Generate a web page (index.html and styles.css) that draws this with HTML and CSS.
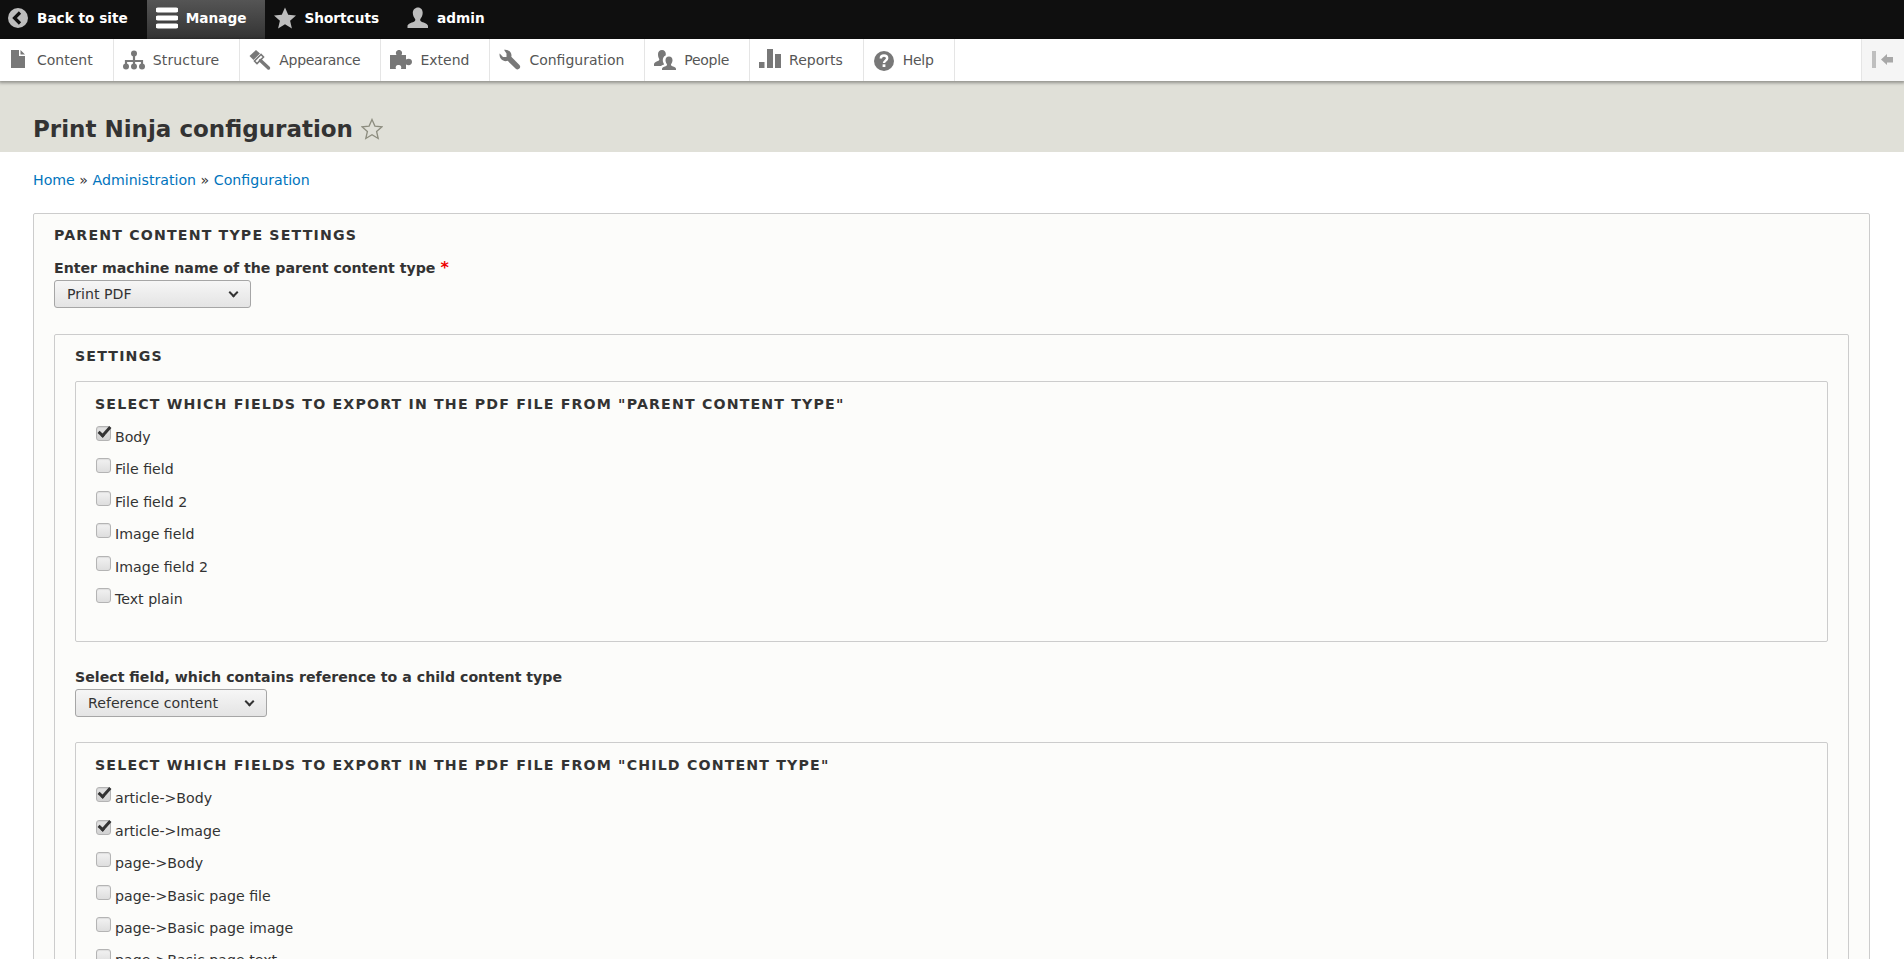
FILE: index.html
```html
<!DOCTYPE html>
<html lang="en">
<head>
    <meta charset="UTF-8">
    <meta name="viewport" content="width=device-width, initial-scale=1.0">
    <title>Print Ninja configuration</title>
    <link rel="stylesheet" href="styles.css">
</head>
<body>
    <div class="toolbar-bar">
        <a class="bar-tab first" href="#">
            <svg class="icon" viewBox="0 0 22 22"><circle cx="11" cy="11" r="10" fill="#bdbdbd"/><path d="M13 5.500L7.500 11l5.500 5.500" fill="none" stroke="#0f0f0f" stroke-width="3.200"/></svg>
            Back to site
        </a>
        <a class="bar-tab active" href="#">
            <svg class="icon" viewBox="0 0 22 22"><path d="M2 1h18a2 2 0 0 1 0 5H2a2 2 0 0 1 0-5zM2 9h18a2 2 0 0 1 0 5H2a2 2 0 0 1 0-5zM2 17h18a2 2 0 0 1 0 5H2a2 2 0 0 1 0-5z" fill="#fff" transform="translate(0 -.5)"/></svg>
            Manage
        </a>
        <a class="bar-tab" href="#">
            <svg class="icon" viewBox="0 0 22 22"><path d="M11 .5l3.200 7.300 7.800.7-5.900 5.200 1.800 7.700L11 17.300l-6.900 4.100 1.800-7.700L0 8.500l7.800-.7z" fill="#bdbdbd"/></svg>
            Shortcuts
        </a>
        <a class="bar-tab" href="#">
            <svg class="icon" viewBox="0 0 22 22"><path d="M11 .5c3 0 4.700 2.300 4.700 5.300 0 2.700-1.300 5-2.300 6.200-.6 1 0 2.300 1.200 2.800 2.700 1 6.400 2.200 6.400 4.400V21H.5v-1.800c0-2.200 3.700-3.400 6.400-4.400 1.200-.5 1.800-1.800 1.200-2.800-1-1.200-2.300-3.500-2.300-6.200C5.800 2.800 8 .5 11 .5z" fill="#bdbdbd"/></svg>
            admin
        </a>
    </div>

    <div class="toolbar-tray">
        <a class="tray-link first" href="#">
            <svg class="icon" viewBox="0 0 22 22"><path d="M4 1h8v6h6v12H4zM13.500 1L18 5.500h-4.500z" fill="#787878"/></svg>
            Content
        </a>
        <a class="tray-link loose" href="#">
            <svg class="icon" viewBox="0 0 22 22"><circle cx="11" cy="4.500" r="3" fill="#787878"/><circle cx="3" cy="17.500" r="3" fill="#787878"/><circle cx="11" cy="17.500" r="3" fill="#787878"/><circle cx="19" cy="17.500" r="3" fill="#787878"/><path d="M11 4v13M3 17v-5h16v5" fill="none" stroke="#787878" stroke-width="2.200"/></svg>
            Structure
        </a>
        <a class="tray-link tight" href="#">
            <svg class="icon" viewBox="0 0 22 22"><path d="M7 1L.5 7l4 4L11 4.500z" fill="#787878"/><path d="M12 5.500L5.500 12l2.500 2.500L14.500 8z" fill="none" stroke="#787878" stroke-width="1.600"/><path d="M11.500 11.500l8 7.500" stroke="#787878" stroke-width="3.400" stroke-linecap="round"/></svg>
            Appearance
        </a>
        <a class="tray-link" href="#">
            <svg class="icon" viewBox="0 0 22 22"><path d="M0 6h6.500C5 3.500 6.500 1 9 1s4 2.500 2.500 5H16v4.500c3-1.500 6-.5 6 2.500s-3 4-6 2.500V20h-5c1-2.500-.5-4-2.500-4S5 17.500 6 20H0z" fill="#787878"/></svg>
            Extend
        </a>
        <a class="tray-link" href="#">
            <svg class="icon" viewBox="0 0 22 22"><path d="M5 .8C8.500 0 12.500 2.500 12.500 6.500c0 .5-.1.9-.2 1.300l7.900 7.900c1.300 1.300 1.300 2.800.2 3.900s-2.600 1.100-3.900-.2L8.600 11.800C4.500 13.200.5 10 .5 5.500c0-.3.1-.5.2-.9L4 8h3.500V4.500z" fill="#787878"/></svg>
            Configuration
        </a>
        <a class="tray-link tight" href="#">
            <svg class="icon" viewBox="0 0 22 22"><path d="M8 1c2.500 0 3.800 1.700 3.800 4 0 .6 0 1-.2 1.500-2 .8-2.800 2.700-2.800 4.700 0 1.700.7 3 1.400 4-.8.700-2.400 1-3.200 1.800H0v-2c0-1.500 3-2.500 4.500-3.200.8-.4 1-1.300.6-2C4.400 8.700 4 7 4 5c0-2.300 1.500-4 4-4z" fill="#787878"/><path d="M15 7.500c2.300 0 3.500 1.600 3.500 3.800 0 1.500-.6 2.800-1.300 3.800-.4.800-.2 1.500.6 1.900 1.500.7 4.200 1.300 4.200 2.700V21H8v-1.300c0-1.400 2.700-2 4.200-2.700.8-.4 1-1.100.6-1.900-.7-1-1.300-2.300-1.300-3.800 0-2.200 1.200-3.800 3.500-3.800z" fill="#787878"/></svg>
            People
        </a>
        <a class="tray-link" href="#">
            <svg class="icon" viewBox="0 0 22 22"><path d="M0 13h5.500v6H0zM8 0h6v19H8zM16 5h6v14h-6z" fill="#787878"/></svg>
            Reports
        </a>
        <a class="tray-link tight" href="#">
            <svg class="icon" viewBox="0 0 22 22"><circle cx="11" cy="12" r="10" fill="#787878"/><path d="M7.800 9.500c0-2 1.500-3 3.200-3s3.200 1 3.200 2.800c0 2.200-3.200 2.400-3.200 4.700" fill="none" stroke="#fff" stroke-width="2.400"/><path d="M9.600 15.300h2.800V18H9.600z" fill="#fff"/></svg>
            Help
        </a>
        <button class="tray-toggle" type="button" aria-label="Collapse">
            <svg viewBox="0 0 22 18" width="22" height="18"><path d="M0 0h4v17H0z" fill="#bfbfbf"/><path d="M9 8.500L15 3v3h6v5.500h-6V14z" fill="#a8a8a8"/></svg>
        </button>
    </div>

    <header class="page-header">
        <h1 class="page-title">Print Ninja configuration</h1>
        <svg class="title-star" viewBox="0 0 22 22"><path d="M11 1.500l2.900 6.600 7.100.7-5.400 4.700 1.600 7-6.200-3.700-6.200 3.700 1.600-7L1 8.800l7.100-.7z" fill="none" stroke="#8d8d7f" stroke-width="1.300"/></svg>
    </header>

    <main class="content">
        <nav class="breadcrumb">
            <a href="#">Home</a> » <a href="#">Administration</a> » <a href="#">Configuration</a>
        </nav>

        <div class="fieldset">
            <div class="legend">Parent content type settings</div>
            <label class="field-label" for="parent">Enter machine name of the parent content type <span class="required">*</span></label>
            <div class="select-wrap select-parent">
                <select id="parent"><option>Print PDF</option></select>
            </div>

            <div class="fieldset nested">
                <div class="legend settings-legend">Settings</div>

                <div class="fieldset checks">
                    <div class="legend">Select which fields to export in the PDF file from "Parent content type"</div>
                    <label class="check"><input type="checkbox" checked> Body</label>
                    <label class="check"><input type="checkbox"> File field</label>
                    <label class="check"><input type="checkbox"> File field 2</label>
                    <label class="check"><input type="checkbox"> Image field</label>
                    <label class="check"><input type="checkbox"> Image field 2</label>
                    <label class="check"><input type="checkbox"> Text plain</label>
                </div>

                <label class="field-label" for="reference">Select field, which contains reference to a child content type</label>
                <div class="select-wrap select-reference">
                    <select id="reference"><option>Reference content</option></select>
                </div>

                <div class="fieldset checks nested">
                    <div class="legend">Select which fields to export in the PDF file from "Child content type"</div>
                    <label class="check"><input type="checkbox" checked> article-&gt;Body</label>
                    <label class="check"><input type="checkbox" checked> article-&gt;Image</label>
                    <label class="check"><input type="checkbox"> page-&gt;Body</label>
                    <label class="check"><input type="checkbox"> page-&gt;Basic page file</label>
                    <label class="check"><input type="checkbox"> page-&gt;Basic page image</label>
                    <label class="check"><input type="checkbox"> page-&gt;Basic page text</label>
                </div>
            </div>
        </div>
    </main>
</body>
</html>
```

FILE: styles.css
```css
html {
    height: 959px;
    overflow: hidden;
}

body {
    margin: 0;
    font-family: "DejaVu Sans", sans-serif;
    font-size: 14.16px;
    color: #333;
    background-color: #fff;
}

a {
    text-decoration: none;
}

.icon {
    width: 22px;
    height: 22px;
    flex: none;
}

/* Top bar */
.toolbar-bar {
    display: flex;
    height: 39px;
    background-color: #0f0f0f;
}

.bar-tab {
    display: flex;
    align-items: center;
    gap: 8px;
    padding: 0 19px 3px 9px;
    color: #fff;
    font-size: 13.65px;
    font-weight: bold;
}

.bar-tab.first {
    padding-left: 7px;
}

.bar-tab.active {
    background-image: linear-gradient(#555, #333);
}

/* Tray */
.toolbar-tray {
    position: relative;
    display: flex;
    height: 42px;
    background-color: #fff;
    box-shadow: 0 1px 3px 1px rgba(0, 0, 0, 0.35);
}

.tray-link {
    display: flex;
    align-items: center;
    gap: 8px;
    padding: 0 20px 0 9px;
    color: #565656;
    font-size: 14px;
    border-right: 1px solid #e5e5e5;
}

.tray-link.first {
    padding-left: 7px;
}

.tray-link.tight {
    letter-spacing: -0.3px;
}

.tray-link.loose {
    letter-spacing: 0.17px;
}

.tray-toggle {
    display: flex;
    align-items: center;
    justify-content: center;
    width: 43px;
    margin-left: auto;
    padding: 0;
    border: 0;
    border-left: 1px solid #e5e5e5;
    background-color: #f5f5f5;
}

/* Page header */
.page-header {
    display: flex;
    align-items: flex-end;
    gap: 8px;
    height: 71px;
    padding: 0 33px 9px;
    box-sizing: border-box;
    background-color: #e0e0d8;
}

.page-title {
    margin: 0;
    font-size: 23px;
    line-height: 28px;
    font-weight: bold;
    color: #333;
}

.title-star {
    width: 22px;
    height: 22px;
    margin-bottom: 3px;
}

/* Content */
.content {
    padding: 19px 34px 0 33px;
}

.breadcrumb {
    margin-bottom: 24px;
    line-height: 18px;
    color: #333;
}

.breadcrumb a {
    color: #0074bd;
}

.fieldset {
    margin-bottom: 26px;
    padding: 12px 20px 18px;
    border: 1px solid #ccc;
    border-radius: 2px;
    background-color: #fcfcfa;
}

.fieldset.nested {
    margin-top: 26px;
}

.fieldset.checks {
    padding: 13px 20px 19px;
}

.fieldset.checks.nested {
    margin-top: 25px;
}

.legend {
    margin-bottom: 15px;
    font-weight: bold;
    line-height: 18px;
    text-transform: uppercase;
    letter-spacing: 1.17px;
}

.checks .legend {
    margin-left: -1px;
}

.settings-legend {
    margin-bottom: 16px;
}

.field-label {
    display: block;
    margin-bottom: 3px;
    font-weight: bold;
    line-height: 18px;
}

.required {
    font-size: 16px;
    line-height: 16px;
    color: #e00;
}

.select-wrap {
    position: relative;
}

.select-wrap::after {
    content: "";
    position: absolute;
    top: 9px;
    width: 5px;
    height: 5px;
    border-right: 2px solid #333;
    border-bottom: 2px solid #333;
    transform: rotate(45deg);
    pointer-events: none;
}

.select-parent::after {
    left: 176px;
}

.select-reference::after {
    left: 171px;
}

select {
    display: block;
    height: 28px;
    padding: 0 0 0 12px;
    font-family: inherit;
    font-size: 14.16px;
    color: #333;
    border: 1px solid #a6a6a6;
    border-radius: 3px;
    background-image: linear-gradient(#f6f6f6, #e4e4e4);
    appearance: none;
}

.select-parent select {
    width: 197px;
}

.select-reference select {
    width: 192px;
}

.check {
    display: flex;
    gap: 4px;
    margin-bottom: 14.4px;
    line-height: 18px;
}

.check input {
    position: relative;
    flex: none;
    width: 15px;
    height: 15px;
    margin: -2px 0 0;
    border: 1px solid #b4b4b4;
    border-radius: 3px;
    background-image: linear-gradient(#f2f2f2, #dedede);
    box-shadow: inset 0 1px 1px rgba(0, 0, 0, 0.08);
    appearance: none;
}

.check input:checked {
    background-image: linear-gradient(#e4e4e4, #d2d2d2);
}

.check input:checked::after {
    content: "";
    position: absolute;
    left: 4px;
    top: -3px;
    width: 4px;
    height: 10px;
    border-right: 3px solid #333;
    border-bottom: 3px solid #333;
    transform: rotate(42deg);
}
```
